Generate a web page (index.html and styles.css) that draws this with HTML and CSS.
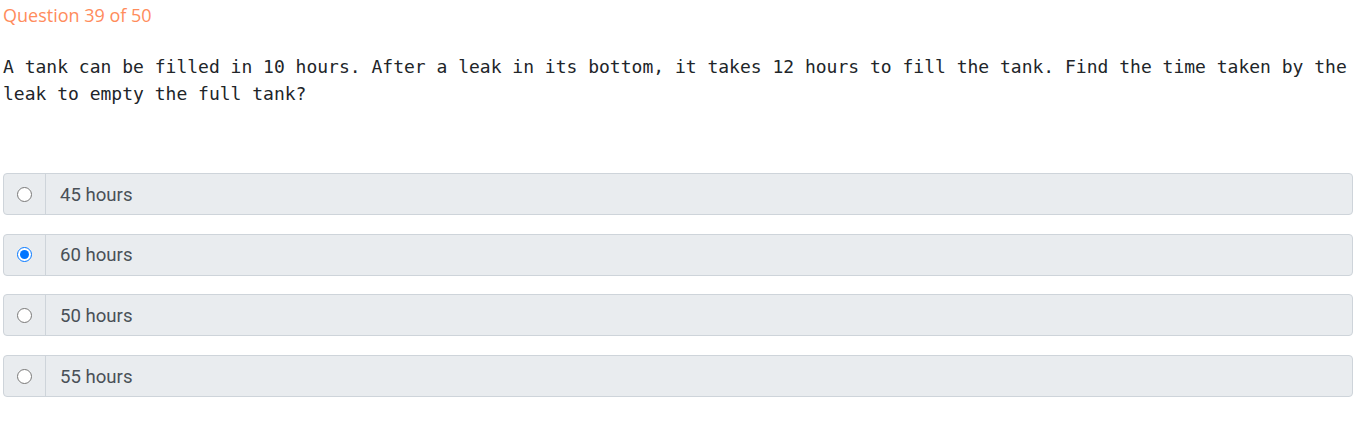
FILE: index.html
```html
<!DOCTYPE html>
<html>
<head>
<meta charset="utf-8">
<link rel="stylesheet" href="styles.css">
</head>
<body>
<div class="quiz">
  <div class="counter">Question 39 of 50</div>
  <p class="question">A tank can be filled in 10 hours. After a leak in its bottom, it takes 12 hours to fill the tank. Find the time taken by the leak to empty the full tank?</p>
  <div class="options">
    <label class="option">
      <span class="radio-cell"><input type="radio" name="q39"></span>
      <span class="option-text">45 hours</span>
    </label>
    <label class="option">
      <span class="radio-cell"><input type="radio" name="q39" checked></span>
      <span class="option-text">60 hours</span>
    </label>
    <label class="option">
      <span class="radio-cell"><input type="radio" name="q39"></span>
      <span class="option-text">50 hours</span>
    </label>
    <label class="option">
      <span class="radio-cell"><input type="radio" name="q39"></span>
      <span class="option-text">55 hours</span>
    </label>
  </div>
</div>
</body>
</html>
```

FILE: styles.css
```css
html, body {
  margin: 0;
  padding: 0;
  background: #ffffff;
}

.quiz {
  width: 1350px;
  padding: 4px 3px 0 3px;
}

.counter {
  font-family: "Open Sans", "Liberation Sans", sans-serif;
  font-size: 18px;
  line-height: 22px;
  color: #ff8c5c;
}

.question {
  margin: 27px 0 0 0;
  font-family: "DejaVu Sans Mono", "Liberation Mono", monospace;
  font-size: 18px;
  line-height: 27px;
  color: #212529;
  width: 1353px;
}

.options {
  margin-top: 66px;
  display: flex;
  flex-direction: column;
  gap: 18.7px;
}

.option {
  display: flex;
  height: 42px;
  box-sizing: border-box;
  border: 1px solid #ced4da;
  border-radius: 4px;
  background: #e9ecef;
  cursor: pointer;
}

.radio-cell {
  width: 41px;
  border-right: 1px solid #ced4da;
  display: flex;
  align-items: center;
  justify-content: center;
}

.radio-cell input {
  margin: 0;
  width: 15px;
  height: 15px;
}

.option-text {
  display: flex;
  align-items: center;
  padding-left: 14px;
  padding-top: 1px;
  font-family: "Roboto", "Liberation Sans", sans-serif;
  font-size: 18.6px;
  color: #495057;
}
```
